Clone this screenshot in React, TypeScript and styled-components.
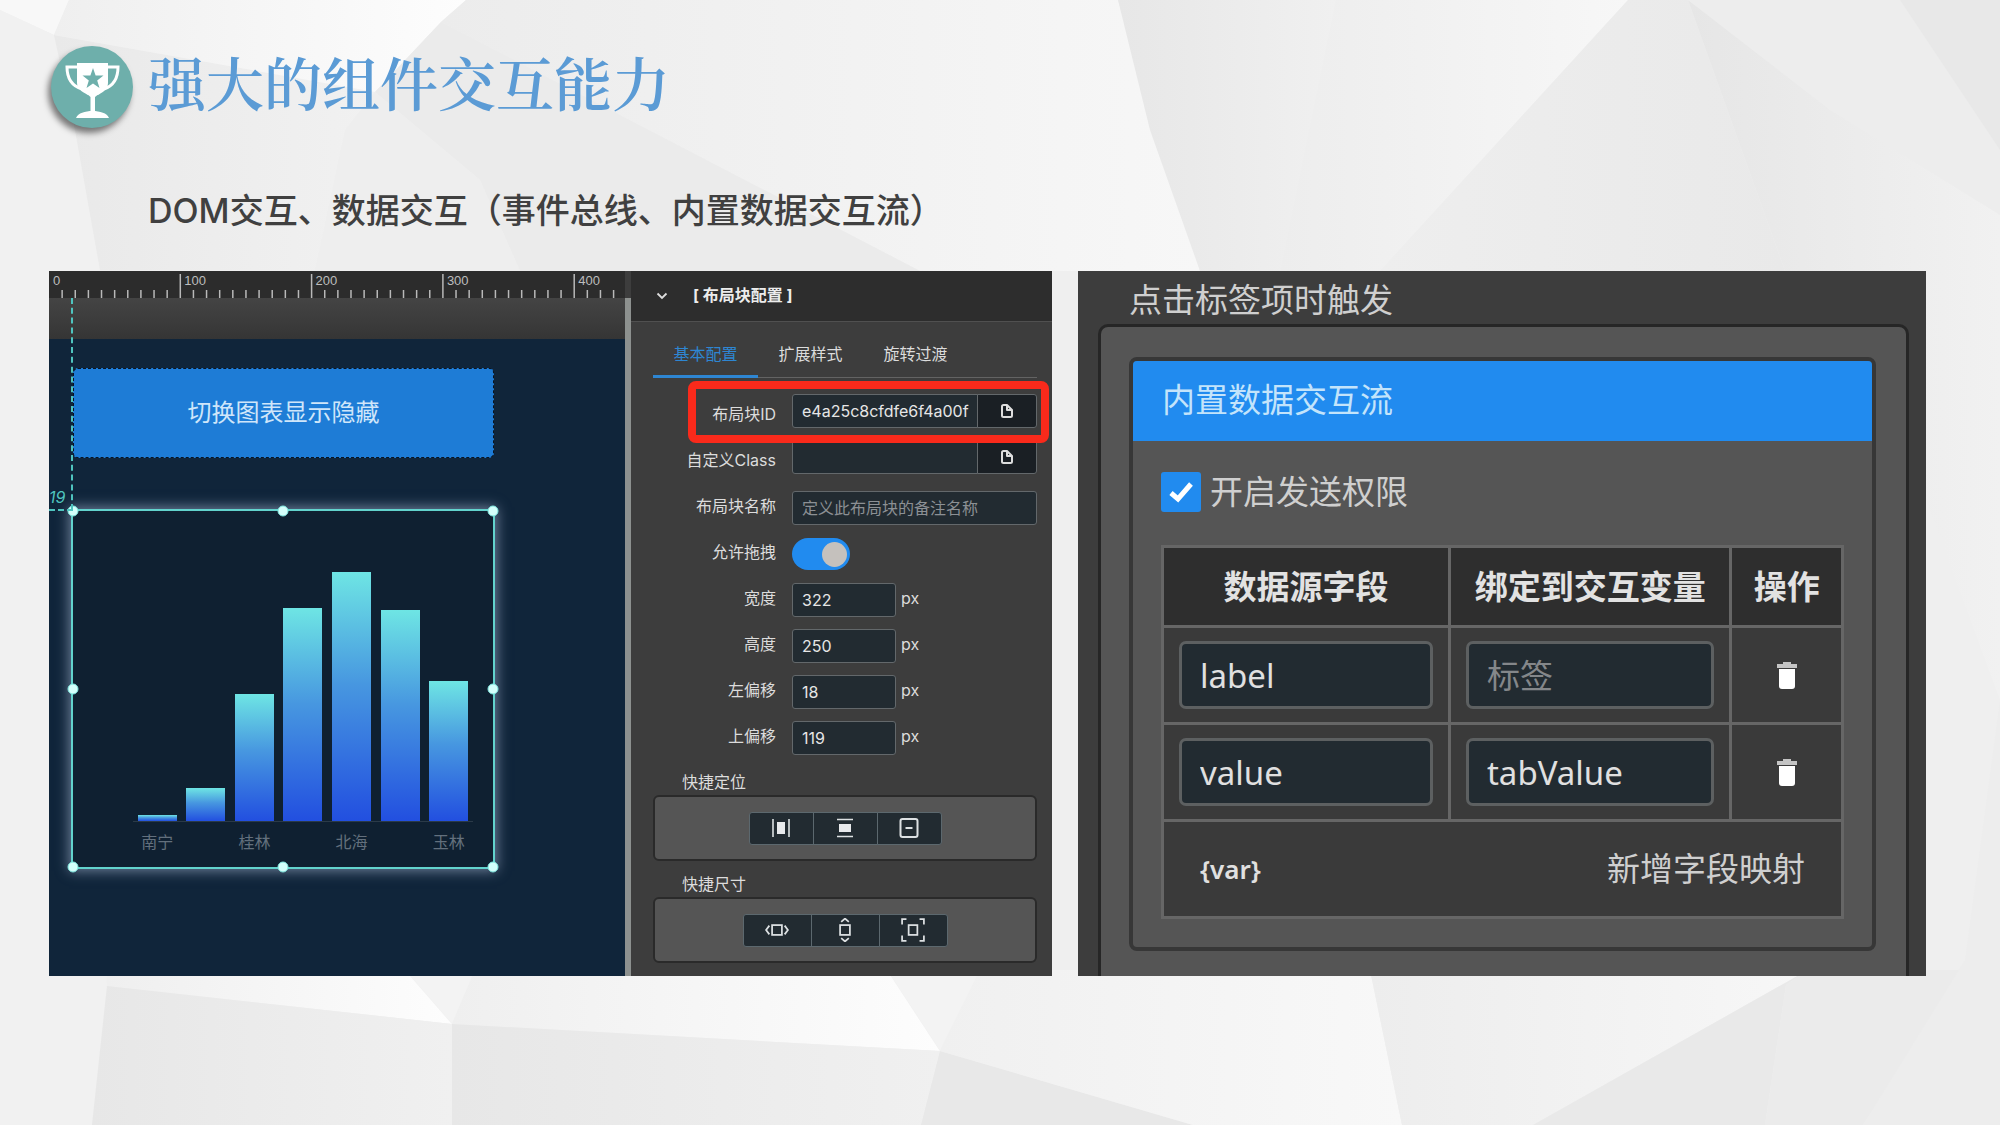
import React from 'react';
import styled, { createGlobalStyle, css } from 'styled-components';

const cjk = '"Noto Sans CJK SC", sans-serif';

const GlobalStyle = createGlobalStyle`
  * { box-sizing: border-box; }
  body { margin: 0; background: #efefef; }
  button, input { font: inherit; color: inherit; margin: 0; }
  h1, h2, h3, p { margin: 0; font-size: inherit; font-weight: inherit; }
`;

const Slide = styled.div`
  position: relative;
  min-height: 100vh;
  font-family: Inter, ${cjk};
  overflow: hidden;
`;

const Backdrop = styled.svg`
  position: absolute;
  inset: 0;
  width: 100%;
  height: 100%;
`;

const Content = styled.div`
  position: relative;
  display: flex;
  flex-direction: column;
  padding: 46px 74px 40px 49px;
`;

const Header = styled.header`
  display: flex;
  align-items: flex-start;
  gap: 15px;
  padding-left: 2px;
`;

const Badge = styled.span`
  flex: none;
  width: 82px;
  height: 82px;
  border-radius: 50%;
  background: #6eafab;
  box-shadow: -3px 5px 6px rgba(0, 0, 0, 0.5);
  svg { display: block; width: 82px; height: 82px; }
`;

const Title = styled.h1`
  font: 600 58px/70px "Noto Serif CJK SC", ${cjk};
  color: #5b9bd5;
`;

const Subtitle = styled.p`
  margin: 59px 0 36px;
  padding-left: 99px;
  font-size: 34px;
  line-height: 48px;
  font-weight: 500;
  color: #404040;
`;

const Shots = styled.main`
  display: grid;
  grid-template-columns: 1003fr 848fr;
  gap: 26px;
`;

/* ---------- editor ---------- */

const Editor = styled.section`
  display: flex;
  min-width: 0;
  background: #3d3d3d;
  overflow: hidden;
`;

const Workspace = styled.div`
  flex: 1;
  min-width: 0;
  display: flex;
  flex-direction: column;
  position: relative;
  overflow: hidden;
`;

const Ruler = styled.svg`
  display: block;
  flex: none;
  width: 100%;
  height: 27px;
  background: #2c2c2c;
`;

const Shade = styled.div`
  flex: none;
  height: 41px;
  background: linear-gradient(#444, #3c3c3c 55%, #353535);
`;

const Stage = styled.div`
  flex: 1;
  background: #10253a;
`;

const Splitter = styled.div`
  flex: none;
  width: 6px;
  margin-top: 27px;
  background: #8d918f;
`;

const Guide = styled.span<{ $dir: 'v' | 'h' }>`
  position: absolute;
  ${p => p.$dir === 'v'
    ? css`left: 22px; top: 27px; height: 212px; border-left: 2px dashed #4fc4bf;`
    : css`left: 0; top: 238px; width: 24px; border-top: 2px dashed #4fc4bf;`}
`;

const GuideLabel = styled.span`
  position: absolute;
  left: 0;
  top: 214px;
  font-size: 16px;
  line-height: 24px;
  font-style: italic;
  color: #4fc4bf;
`;

const StageButton = styled.button`
  position: absolute;
  left: 24px;
  top: 97px;
  width: 421px;
  height: 90px;
  padding: 0;
  border: 1px dashed #0a1420;
  border-radius: 5px;
  background: #1e7cd6;
  color: #cfe6fa;
  font-size: 24px;
  line-height: 32px;
`;

const Selection = styled.div`
  position: absolute;
  left: 22px;
  top: 238px;
  width: 424px;
  height: 360px;
  border: 2px solid #62d3cd;
  background: #0f2031;
  box-shadow: 0 0 12px 2px rgba(170, 185, 215, 0.6);
  display: flex;
  flex-direction: column;
  justify-content: flex-end;
  padding: 0 20px 13px 60px;
`;

const Handle = styled.span<{ $x: number; $y: number }>`
  position: absolute;
  width: 11px;
  height: 11px;
  border-radius: 50%;
  background: #d4fffb;
  border: 1px solid #7fe6df;
  left: ${p => p.$x}%;
  top: ${p => p.$y}%;
  transform: translate(-50%, -50%);
`;

const Bars = styled.div`
  display: grid;
  grid-template-columns: repeat(7, 1fr);
  align-items: end;
  justify-items: center;
  border-bottom: 1px solid #2b3a48;
`;

const Bar = styled.i`
  width: 39px;
  background: linear-gradient(#6ee5e4, #4797e0 45%, #224fe0);
`;

const AxisLabels = styled.div`
  display: grid;
  grid-template-columns: repeat(7, 1fr);
  margin-top: 8px;
  font-size: 16px;
  line-height: 24px;
  text-align: center;
  color: #63707d;
`;

/* ---------- inspector ---------- */

const Inspector = styled.aside`
  flex: none;
  width: 421px;
  font-size: 16px;
  line-height: 24px;
  color: #dcdcdc;
`;

const InspectorHead = styled.div`
  display: flex;
  align-items: center;
  gap: 24px;
  height: 51px;
  padding: 0 0 2px 24px;
  background: #2d2d2d;
  border-bottom: 1px solid #505050;
  font-weight: 700;
  color: #ececec;
  svg { display: block; }
`;

const InspectorBody = styled.div`
  padding: 10px 15px 13px 22px;
`;

const Tabs = styled.div`
  display: flex;
  border-bottom: 1px solid #636363;
  margin-bottom: 16px;
`;

const Tab = styled.button<{ $active?: boolean }>`
  width: 105px;
  height: 46px;
  padding: 0;
  border: 0;
  border-bottom: 3px solid ${p => (p.$active ? '#2e86d2' : 'transparent')};
  margin-bottom: -1px;
  background: none;
  color: ${p => (p.$active ? '#2e86d2' : '#dcdcdc')};
`;

const Fields = styled.div`
  position: relative;
  display: grid;
  gap: 12px;
  & + & { margin-top: 17px; }
`;

const Field = styled.div`
  display: grid;
  grid-template-columns: 123px 1fr;
  column-gap: 16px;
  align-items: center;
  height: 34px;
`;

const FieldLabel = styled.label<{ $low?: boolean }>`
  text-align: right;
  padding: ${p => (p.$low ? '6px 0 0' : '0 0 4px')};
`;

const Control = styled.div`
  display: flex;
  align-items: center;
  gap: 5px;
`;

const Unit = styled.span`
  padding-bottom: 4px;
`;

const TextInput = styled.input<{ $short?: boolean }>`
  width: ${p => (p.$short ? '104px' : '100%')};
  min-width: 0;
  height: 34px;
  padding: 0 8px 0 9px;
  border: 1px solid #63686b;
  border-radius: 3px;
  background: #222b31;
  color: #e6e6e6;
  font-size: 16px;
  outline: 0;
  &::placeholder { color: #8c9094; opacity: 1; }
`;

const InputGroup = styled.div`
  display: flex;
  ${TextInput} { flex: 1; border-radius: 3px 0 0 3px; }
`;

const AddonButton = styled.button`
  display: grid;
  place-items: center;
  width: 60px;
  height: 34px;
  margin-left: -1px;
  padding: 0;
  border: 1px solid #63686b;
  border-radius: 0 3px 3px 0;
  background: #1a1f24;
`;

const Switch = styled.input`
  appearance: none;
  width: 58px;
  height: 32px;
  border-radius: 16px;
  background: #218bef;
  display: flex;
  justify-content: flex-end;
  align-items: center;
  padding: 0 3px;
  &::before {
    content: '';
    width: 25px;
    height: 25px;
    border-radius: 50%;
    background: #c5c1bd;
  }
`;

const Highlight = styled.span`
  position: absolute;
  left: 35px;
  right: -12px;
  top: -13px;
  height: 62px;
  border: 8px solid #fa2a1b;
  border-radius: 8px;
  pointer-events: none;
`;

const QuickTitle = styled.h3`
  margin: 11px 0 1px;
  padding-left: 29px;
  &:first-of-type { margin-top: 15px; }
`;

const QuickBox = styled.div`
  display: flex;
  justify-content: center;
  align-items: center;
  height: 66px;
  border: 2px solid #2a2a2a;
  border-radius: 6px;
  background: #555;
`;

const QuickButton = styled.button<{ $w: number }>`
  display: grid;
  place-items: center;
  width: ${p => p.$w}px;
  height: 33px;
  padding: 0;
  border: 1px solid #5c686e;
  background: #222b31;
  & + & { margin-left: -1px; }
  &:first-child { border-radius: 3px 0 0 3px; }
  &:last-child { border-radius: 0 3px 3px 0; }
`;

/* ---------- data flow ---------- */

const Flow = styled.section`
  display: flex;
  flex-direction: column;
  min-width: 0;
  padding: 0 17px 0 20px;
  background: #3d3d3d;
  font: 400 33px/48px "Noto Sans", ${cjk};
  color: #cfcfcf;
`;

const FlowTitle = styled.h2`
  padding: 5px 0 0 31px;
`;

const FlowBox = styled.div`
  flex: 1;
  padding: 30px 30px 25px 28px;
  border: 3px solid #262626;
  border-bottom: 0;
  border-radius: 10px 10px 0 0;
  background: #555;
`;

const Card = styled.div`
  border: 4px solid #373737;
  border-radius: 8px;
  overflow: hidden;
`;

const CardHead = styled.h3`
  padding: 15px 29px 17px;
  background: #218bef;
  color: #c3e4fb;
`;

const CardBody = styled.div`
  padding: 27px 28px 28px;
`;

const CheckLine = styled.label`
  display: flex;
  align-items: center;
  gap: 9px;
  margin-bottom: 29px;
`;

const CheckWrap = styled.span`
  display: grid;
  place-items: center;
  & > * { grid-area: 1 / 1; }
  svg { pointer-events: none; }
`;

const Checkbox = styled.input`
  appearance: none;
  width: 40px;
  height: 40px;
  border-radius: 3px;
  background: #218bef;
`;

const Table = styled.table`
  width: 100%;
  table-layout: fixed;
  border-collapse: collapse;
  background: #3a3a3a;
  th, td { border: 3px solid #666; padding: 0 15px; }
  th { height: 80px; padding: 0; background: #2e2e2e; color: #e2e2e2; font-weight: 700; }
  td { height: 97px; }
`;

const CellInput = styled.input`
  display: block;
  width: 100%;
  height: 68px;
  padding: 0 18px;
  border: 3px solid #5d6061;
  border-radius: 7px;
  background: #222b31;
  color: #e0e0e0;
  outline: 0;
  &::placeholder { color: #84878a; opacity: 1; }
`;

const IconButton = styled.button`
  display: block;
  margin: 0 auto;
  padding: 0;
  border: 0;
  background: none;
  svg { display: block; }
`;

const FootRow = styled.div`
  display: flex;
  justify-content: space-between;
  align-items: center;
  padding: 0 21px;
`;

const VarMark = styled.span`
  font-size: 26px;
  font-weight: 600;
  color: #e0e0e0;
`;

const AddButton = styled.button`
  padding: 0;
  border: 0;
  background: none;
  line-height: 48px;
`;

/* ---------- drawings ---------- */

const facets: [string, string][] = [
  ['0,0 69,0 54,35 0,10', '#f8f8f8'],
  ['0,10 54,35 75,130 100,270 107,986 92,1125 0,1125', '#f1f1f1'],
  ['54,35 375,92 345,130 315,270 100,270 75,130', 'url(#g1)'],
  ['69,0 466,0 441,22 375,92 54,35', 'url(#g2)'],
  ['466,0 1118,0 1200,271 920,271 441,22', 'url(#g8)'],
  ['375,92 441,22 920,271 520,271 480,180', '#ebebeb'],
  ['375,92 480,180 520,271 315,271 345,130', '#eeeeee'],
  ['1118,0 1336,0 1280,271 1200,271 1150,130', 'url(#g4)'],
  ['1336,0 1628,0 1380,271 1280,271', 'url(#g5)'],
  ['1628,0 1688,0 1785,271 1380,271', 'url(#g6)'],
  ['1688,0 2000,215 2000,700 1926,500 1785,271', 'url(#g7)'],
  ['1688,0 2000,0 2000,215 1830,110', '#ededed'],
  ['1900,0 2000,0 2000,150', '#e8e8e8'],
  ['107,970 405,970 452,1024 107,986', 'url(#g2)'],
  ['405,970 475,970 452,1024', '#f3f3f3'],
  ['475,970 887,970 940,1051 452,1024', 'url(#g2)'],
  ['887,970 980,970 940,1051', '#f3f3f3'],
  ['107,986 452,1024 452,1125 92,1125', 'url(#g4)'],
  ['452,1024 940,1051 921,1125 452,1125', 'url(#g4)'],
  ['940,1051 1193,1125 921,1125', '#e8e8e8'],
  ['980,970 1370,970 1402,1125 1193,1125 940,1051', 'url(#g3)'],
  ['1370,970 1808,970 1533,1125 1402,1125', 'url(#g5)'],
  ['1808,970 1786,985 1765,1125 1533,1125', '#e9e9e9'],
  ['1808,970 1965,970 1863,1125 1765,1125 1786,985', '#ebebeb'],
  ['1965,960 2000,700 2000,1125 1863,1125', '#ededed'],
];

const shades: [string, string, string][] = [
  ['g1', '#e9e9e9', '#f1f1f1'],
  ['g2', '#efefef', '#fdfdfd'],
  ['g3', '#f0f0f0', '#f8f8f8'],
  ['g4', '#e7e7e7', '#f0f0f0'],
  ['g5', '#ededed', '#f7f7f7'],
  ['g6', '#eeeeee', '#e9e9e9'],
  ['g7', '#e6e6e6', '#f1f1f1'],
  ['g8', '#ececec', '#f7f7f7'],
];

const Facets = () => (
  <Backdrop viewBox="0 0 2000 1125" preserveAspectRatio="none" aria-hidden="true">
    <defs>
      {shades.map(([id, from, to]) => (
        <linearGradient key={id} id={id}>
          <stop offset="0" stopColor={from} />
          <stop offset="1" stopColor={to} />
        </linearGradient>
      ))}
    </defs>
    {facets.map(([points, fill]) => <polygon key={points} points={points} fill={fill} />)}
  </Backdrop>
);

const Trophy = () => (
  <svg viewBox="0 0 82 82" aria-hidden="true">
    <path d="M26 17H57V37C57 44 50 47 47 49H37C34 47 26 44 26 37Z" fill="#fff" />
    <path d="M35 47H49L44 51V66H39.500V51Z" fill="#fff" />
    <path d="M25 72C27 67 34 65 41.500 65C49 65 56 67 58 72Z" fill="#fff" />
    <path d="M28 21H16C16 33 21 40 31 43M56 21H67C67 33 62 40 53 43" fill="none" stroke="#fff" strokeWidth="3" />
    <path d="M42 22L44.600 29.400L52.500 29.600L46.200 34.400L48.500 42L42 37.500L35.500 42L37.800 34.400L31.500 29.600L39.400 29.400Z" fill="#6eafab" />
  </svg>
);

const step = 131.3 / 10;
const RulerMarks = () => (
  <Ruler aria-hidden="true">
    {Array.from({ length: 44 }, (_, i) => i + 1).map(i => (
      <line key={i} x1={i * step} x2={i * step} y1={i % 10 ? 19 : 3} y2="27" stroke="#b9b9b9" strokeWidth="1.500" />
    ))}
    {[0, 100, 200, 300, 400].map(n => (
      <text key={n} x={n * 1.313 + 4} y="14" fontSize="13" fontFamily="Liberation Sans" fill="#bdbdbd">{n}</text>
    ))}
  </Ruler>
);

const Line = ({ children, size = 22 }: { children: React.ReactNode; size?: number }) => (
  <svg width={size} height={size} viewBox="0 0 22 22" fill="none" stroke="#dde1e3" strokeWidth="1.600" aria-hidden="true">
    {children}
  </svg>
);

const FileIcon = () => (
  <svg width="12" height="14" viewBox="0 0 12 14" fill="none" stroke="#dedede" strokeWidth="2" strokeLinejoin="round" aria-hidden="true">
    <path d="M2.500 1H6L11 6V11.500Q11 13 9.500 13H2.500Q1 13 1 11.500V2.500Q1 1 2.500 1Z" />
    <path d="M6 1V6H11" />
  </svg>
);

const TrashIcon = () => (
  <svg width="22" height="28" viewBox="0 0 22 28" aria-hidden="true">
    <path d="M7 1H15V3H21V7H1V3H7Z" fill="#c4c4c4" />
    <path d="M3 8H19V25Q19 28 16 28H6Q3 28 3 25Z" fill="#fff" />
  </svg>
);

const alignButtons: [string, React.ReactNode][] = [
  ['水平居中', <><path d="M3 2V20M19 2V20" /><path d="M7 5H15V17H7Z" fill="#e8eaec" stroke="none" /></>],
  ['垂直居中', <><path d="M3 2.500H19M3 19.500H19" /><path d="M5 7H17V15H5Z" fill="#e8eaec" stroke="none" /></>],
  ['居中', <><rect x="2.500" y="2" width="17" height="18" rx="2" strokeWidth="2" /><path d="M7.500 11H14.500" strokeWidth="2" /></>],
];

const sizeButtons: [string, React.ReactNode][] = [
  ['撑满宽度', <><rect x="6.500" y="6.500" width="9" height="9" /><path d="M4 7L1 11L4 15M18 7L21 11L18 15" /></>],
  ['撑满高度', <><rect x="6.500" y="6.500" width="9" height="9" /><path d="M7.500 3.500L11 0.500L14.500 3.500M7.500 18.500L11 21.500L14.500 18.500" /></>],
  ['撑满全部', <><rect x="7" y="6.500" width="8" height="9" /><path d="M1 6V1H5M17 1H21V6M21 16V21H17M5 21H1V16" /></>],
];

const bars = [6, 33, 127, 213, 249, 211, 140];
const cities = ['南宁', '', '桂林', '', '北海', '', '玉林'];
const handles = [[0, 0], [50, 0], [100, 0], [0, 50], [100, 50], [0, 100], [50, 100], [100, 100]];
const sizes: [string, string, string][] = [
  ['w', '宽度', '322'], ['h', '高度', '250'], ['x', '左偏移', '18'], ['y', '上偏移', '119'],
];

export default function App() {
  return (
    <>
      <GlobalStyle />
      <Slide>
        <Facets />
        <Content>
          <Header>
            <Badge><Trophy /></Badge>
            <Title>强大的组件交互能力</Title>
          </Header>
          <Subtitle>DOM交互、数据交互（事件总线、内置数据交互流）</Subtitle>

          <Shots>
            <Editor>
              <Workspace>
                <RulerMarks />
                <Shade />
                <Stage />
                <StageButton>切换图表显示隐藏</StageButton>
                <Selection>
                  <Bars>
                    {bars.map((h, i) => <Bar key={i} style={{ height: h }} />)}
                  </Bars>
                  <AxisLabels>
                    {cities.map((c, i) => <span key={i}>{c}</span>)}
                  </AxisLabels>
                  {handles.map(([x, y]) => <Handle key={`${x}-${y}`} $x={x} $y={y} />)}
                </Selection>
                <Guide $dir="v" />
                <Guide $dir="h" />
                <GuideLabel>19</GuideLabel>
              </Workspace>
              <Splitter />
              <Inspector>
                <InspectorHead>
                  <svg width="14" height="14" viewBox="0 0 14 14" fill="none" stroke="#dedede" strokeWidth="1.800" aria-hidden="true">
                    <path d="M2.500 5.500L7 10L11.500 5.500" />
                  </svg>
                  <span>[ 布局块配置 ]</span>
                </InspectorHead>
                <InspectorBody>
                  <Tabs>
                    <Tab $active>基本配置</Tab>
                    <Tab>扩展样式</Tab>
                    <Tab>旋转过渡</Tab>
                  </Tabs>
                  <Fields>
                    <Field>
                      <FieldLabel $low htmlFor="block-id">布局块ID</FieldLabel>
                      <InputGroup>
                        <TextInput id="block-id" defaultValue="e4a25c8cfdfe6f4a00f" />
                        <AddonButton aria-label="复制"><FileIcon /></AddonButton>
                      </InputGroup>
                    </Field>
                    <Field>
                      <FieldLabel $low htmlFor="block-class">自定义Class</FieldLabel>
                      <InputGroup>
                        <TextInput id="block-class" />
                        <AddonButton aria-label="复制"><FileIcon /></AddonButton>
                      </InputGroup>
                    </Field>
                    <Highlight />
                  </Fields>
                  <Fields>
                    <Field>
                      <FieldLabel htmlFor="block-name">布局块名称</FieldLabel>
                      <TextInput id="block-name" placeholder="定义此布局块的备注名称" />
                    </Field>
                    <Field>
                      <FieldLabel htmlFor="block-drag">允许拖拽</FieldLabel>
                      <Switch id="block-drag" type="checkbox" role="switch" defaultChecked />
                    </Field>
                    {sizes.map(([id, label, value]) => (
                      <Field key={id}>
                        <FieldLabel htmlFor={`block-${id}`}>{label}</FieldLabel>
                        <Control>
                          <TextInput $short id={`block-${id}`} defaultValue={value} />
                          <Unit>px</Unit>
                        </Control>
                      </Field>
                    ))}
                  </Fields>
                  <QuickTitle>快捷定位</QuickTitle>
                  <QuickBox>
                    {alignButtons.map(([name, icon]) => (
                      <QuickButton key={name} $w={65} aria-label={name}><Line>{icon}</Line></QuickButton>
                    ))}
                  </QuickBox>
                  <QuickTitle>快捷尺寸</QuickTitle>
                  <QuickBox>
                    {sizeButtons.map(([name, icon]) => (
                      <QuickButton key={name} $w={69} aria-label={name}><Line size={24}>{icon}</Line></QuickButton>
                    ))}
                  </QuickBox>
                </InspectorBody>
              </Inspector>
            </Editor>

            <Flow>
              <FlowTitle>点击标签项时触发</FlowTitle>
              <FlowBox>
                <Card>
                  <CardHead>内置数据交互流</CardHead>
                  <CardBody>
                    <CheckLine>
                      <CheckWrap>
                        <Checkbox type="checkbox" defaultChecked />
                        <svg width="28" height="28" viewBox="0 0 28 28" fill="none" stroke="#fff" strokeWidth="5" aria-hidden="true">
                          <path d="M4 15L11 21L24 6" />
                        </svg>
                      </CheckWrap>
                      开启发送权限
                    </CheckLine>
                    <Table>
                      <colgroup>
                        <col style={{ width: '42.200%' }} />
                        <col style={{ width: '41.400%' }} />
                        <col />
                      </colgroup>
                      <thead>
                        <tr><th>数据源字段</th><th>绑定到交互变量</th><th>操作</th></tr>
                      </thead>
                      <tbody>
                        <tr>
                          <td><CellInput aria-label="数据源字段" defaultValue="label" /></td>
                          <td><CellInput aria-label="绑定到交互变量" placeholder="标签" /></td>
                          <td><IconButton aria-label="删除"><TrashIcon /></IconButton></td>
                        </tr>
                        <tr>
                          <td><CellInput aria-label="数据源字段" defaultValue="value" /></td>
                          <td><CellInput aria-label="绑定到交互变量" defaultValue="tabValue" /></td>
                          <td><IconButton aria-label="删除"><TrashIcon /></IconButton></td>
                        </tr>
                        <tr>
                          <td colSpan={3}>
                            <FootRow>
                              <VarMark>{'{var}'}</VarMark>
                              <AddButton>新增字段映射</AddButton>
                            </FootRow>
                          </td>
                        </tr>
                      </tbody>
                    </Table>
                  </CardBody>
                </Card>
              </FlowBox>
            </Flow>
          </Shots>
        </Content>
      </Slide>
    </>
  );
}
